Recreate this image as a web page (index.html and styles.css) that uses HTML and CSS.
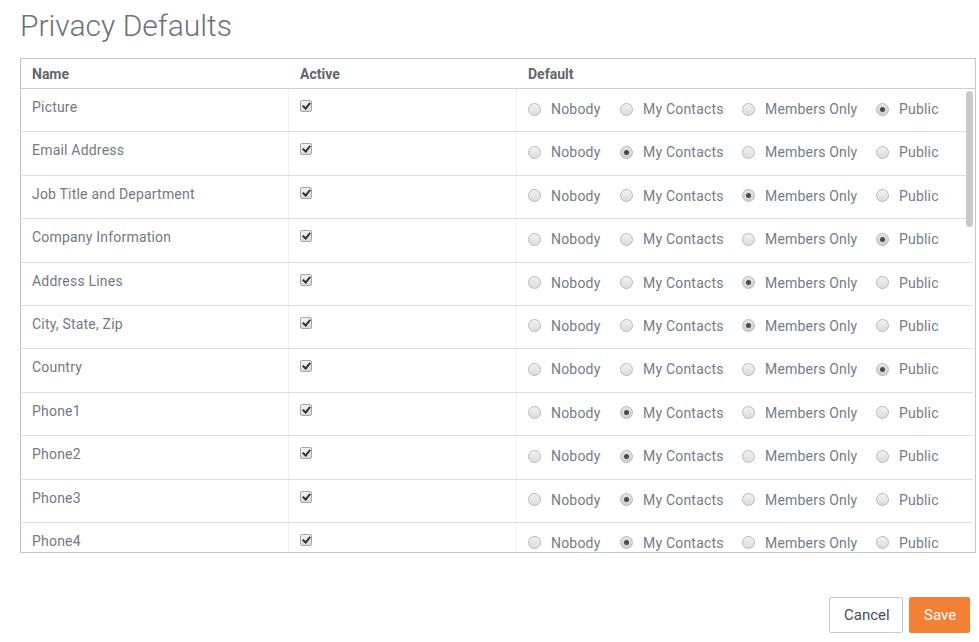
FILE: index.html
```html
<!DOCTYPE html>
<html lang="en">
<head>
  <meta charset="UTF-8">
  <title>Privacy Defaults</title>
  <link rel="stylesheet" href="styles.css">
</head>
<body>
  <div class="page">
    <h1 class="page-title">Privacy Defaults</h1>

    <!-- Privacy grid -->
    <div class="privacy-box">
      <div class="grid-head">
        <div class="col-name">Name</div>
        <div class="col-active">Active</div>
        <div class="col-default">Default</div>
      </div>

      <div class="grid-body">
        <div class="row">
          <div class="col-name">Picture</div>
          <div class="col-active"><span class="check"></span></div>
          <div class="col-default options">
            <span class="opt"><span class="radio"></span>Nobody</span>
            <span class="opt"><span class="radio"></span>My Contacts</span>
            <span class="opt"><span class="radio"></span>Members Only</span>
            <span class="opt"><span class="radio on"></span>Public</span>
          </div>
        </div>
        <div class="row">
          <div class="col-name">Email Address</div>
          <div class="col-active"><span class="check"></span></div>
          <div class="col-default options">
            <span class="opt"><span class="radio"></span>Nobody</span>
            <span class="opt"><span class="radio on"></span>My Contacts</span>
            <span class="opt"><span class="radio"></span>Members Only</span>
            <span class="opt"><span class="radio"></span>Public</span>
          </div>
        </div>
        <div class="row">
          <div class="col-name">Job Title and Department</div>
          <div class="col-active"><span class="check"></span></div>
          <div class="col-default options">
            <span class="opt"><span class="radio"></span>Nobody</span>
            <span class="opt"><span class="radio"></span>My Contacts</span>
            <span class="opt"><span class="radio on"></span>Members Only</span>
            <span class="opt"><span class="radio"></span>Public</span>
          </div>
        </div>
        <div class="row">
          <div class="col-name">Company Information</div>
          <div class="col-active"><span class="check"></span></div>
          <div class="col-default options">
            <span class="opt"><span class="radio"></span>Nobody</span>
            <span class="opt"><span class="radio"></span>My Contacts</span>
            <span class="opt"><span class="radio"></span>Members Only</span>
            <span class="opt"><span class="radio on"></span>Public</span>
          </div>
        </div>
        <div class="row">
          <div class="col-name">Address Lines</div>
          <div class="col-active"><span class="check"></span></div>
          <div class="col-default options">
            <span class="opt"><span class="radio"></span>Nobody</span>
            <span class="opt"><span class="radio"></span>My Contacts</span>
            <span class="opt"><span class="radio on"></span>Members Only</span>
            <span class="opt"><span class="radio"></span>Public</span>
          </div>
        </div>
        <div class="row">
          <div class="col-name">City, State, Zip</div>
          <div class="col-active"><span class="check"></span></div>
          <div class="col-default options">
            <span class="opt"><span class="radio"></span>Nobody</span>
            <span class="opt"><span class="radio"></span>My Contacts</span>
            <span class="opt"><span class="radio on"></span>Members Only</span>
            <span class="opt"><span class="radio"></span>Public</span>
          </div>
        </div>
        <div class="row">
          <div class="col-name">Country</div>
          <div class="col-active"><span class="check"></span></div>
          <div class="col-default options">
            <span class="opt"><span class="radio"></span>Nobody</span>
            <span class="opt"><span class="radio"></span>My Contacts</span>
            <span class="opt"><span class="radio"></span>Members Only</span>
            <span class="opt"><span class="radio on"></span>Public</span>
          </div>
        </div>
        <div class="row">
          <div class="col-name">Phone1</div>
          <div class="col-active"><span class="check"></span></div>
          <div class="col-default options">
            <span class="opt"><span class="radio"></span>Nobody</span>
            <span class="opt"><span class="radio on"></span>My Contacts</span>
            <span class="opt"><span class="radio"></span>Members Only</span>
            <span class="opt"><span class="radio"></span>Public</span>
          </div>
        </div>
        <div class="row">
          <div class="col-name">Phone2</div>
          <div class="col-active"><span class="check"></span></div>
          <div class="col-default options">
            <span class="opt"><span class="radio"></span>Nobody</span>
            <span class="opt"><span class="radio on"></span>My Contacts</span>
            <span class="opt"><span class="radio"></span>Members Only</span>
            <span class="opt"><span class="radio"></span>Public</span>
          </div>
        </div>
        <div class="row">
          <div class="col-name">Phone3</div>
          <div class="col-active"><span class="check"></span></div>
          <div class="col-default options">
            <span class="opt"><span class="radio"></span>Nobody</span>
            <span class="opt"><span class="radio on"></span>My Contacts</span>
            <span class="opt"><span class="radio"></span>Members Only</span>
            <span class="opt"><span class="radio"></span>Public</span>
          </div>
        </div>
        <div class="row">
          <div class="col-name">Phone4</div>
          <div class="col-active"><span class="check"></span></div>
          <div class="col-default options">
            <span class="opt"><span class="radio"></span>Nobody</span>
            <span class="opt"><span class="radio on"></span>My Contacts</span>
            <span class="opt"><span class="radio"></span>Members Only</span>
            <span class="opt"><span class="radio"></span>Public</span>
          </div>
        </div>

        <!-- scroll thumb -->
        <div class="scroll-thumb"></div>
      </div>
    </div>

    <div class="actions">
      <button class="btn btn-cancel">Cancel</button>
      <button class="btn btn-save">Save</button>
    </div>
  </div>
</body>
</html>
```

FILE: styles.css
```css
body {
  margin: 0;
  font-family: Roboto, "Liberation Sans", sans-serif;
  color: #737884;
  background: #fff;
}

.page {
  padding: 0 4px 0 20px;
}

.page-title {
  margin: 0;
  padding-top: 8px;
  height: 50px;
  font-size: 30px;
  font-weight: 300;
  color: #6b717d;
  letter-spacing: 0;
}

/* Privacy grid */
.privacy-box {
  border: 1px solid #c6c6c6;
  width: 954px;
}

.grid-head,
.row {
  display: grid;
  grid-template-columns: 268px 228px 1fr;
}

.grid-head {
  height: 29px;
  border-bottom: 1px solid #cfcfcf;
  font-size: 14px;
  font-weight: 700;
  color: #62666f;
}

.grid-head > div {
  padding: 7px 11px 0;
}

.grid-body {
  position: relative;
  height: 463px;
  overflow: hidden;
}

.row {
  height: 42.4px;
  border-bottom: 1px solid #dcdcdc;
  margin-right: 2px;
  font-size: 14px;
  letter-spacing: 0.2px;
}

.row > div {
  padding: 8px 11px 0;
  line-height: 20px;
}

.row .col-name,
.row .col-active {
  border-right: 1px solid #f3f3f3;
}

.row .col-active {
  padding-top: 11px;
}

.row .options {
  padding-top: 10px;
  display: grid;
  grid-template-columns: 92px 122px 134px auto;
  align-items: start;
  align-content: start;
}

.opt {
  display: flex;
  align-items: center;
  height: 20px;
  gap: 10px;
  color: #757b88;
}

/* fake controls */
.check {
  position: relative;
  display: block;
  width: 10px;
  height: 10px;
  border: 1px solid #a7a7a7;
  border-radius: 2px;
  background: linear-gradient(#f2f2f2, #dadada);
}

.check::after {
  content: "";
  position: absolute;
  left: 3px;
  top: 0;
  width: 3px;
  height: 6px;
  border-right: 2px solid #333;
  border-bottom: 2px solid #333;
  transform: rotate(40deg);
}

.radio {
  position: relative;
  display: block;
  width: 11px;
  height: 11px;
  border: 1px solid #b9b9b9;
  border-radius: 50%;
  background: linear-gradient(#f1f1f1, #dcdcdc);
  flex-shrink: 0;
}

.radio.on {
  background: linear-gradient(#e2e2e2, #cfcfcf);
}

.radio.on::after {
  content: "";
  position: absolute;
  left: 3px;
  top: 3px;
  width: 5px;
  height: 5px;
  border-radius: 50%;
  background: #4a4a4a;
}

.scroll-thumb {
  position: absolute;
  top: 2px;
  right: 2px;
  width: 7px;
  height: 136px;
  border-radius: 4px;
  background: #c9c9c9;
}

/* Buttons */
.actions {
  display: flex;
  justify-content: flex-end;
  gap: 6px;
  margin-top: 44px;
  padding-right: 5px;
}

.btn {
  height: 36px;
  padding: 0 14px;
  font-family: Roboto, "Liberation Sans", sans-serif;
  font-size: 15px;
  border-radius: 2px;
  cursor: pointer;
}

.btn-cancel {
  width: 74px;
  background: #fff;
  color: #4a4d55;
  border: 1px solid #c9c9c9;
}

.btn-save {
  width: 61px;
  background: #f28035;
  color: #fff;
  border: 1px solid #f28035;
}
```
